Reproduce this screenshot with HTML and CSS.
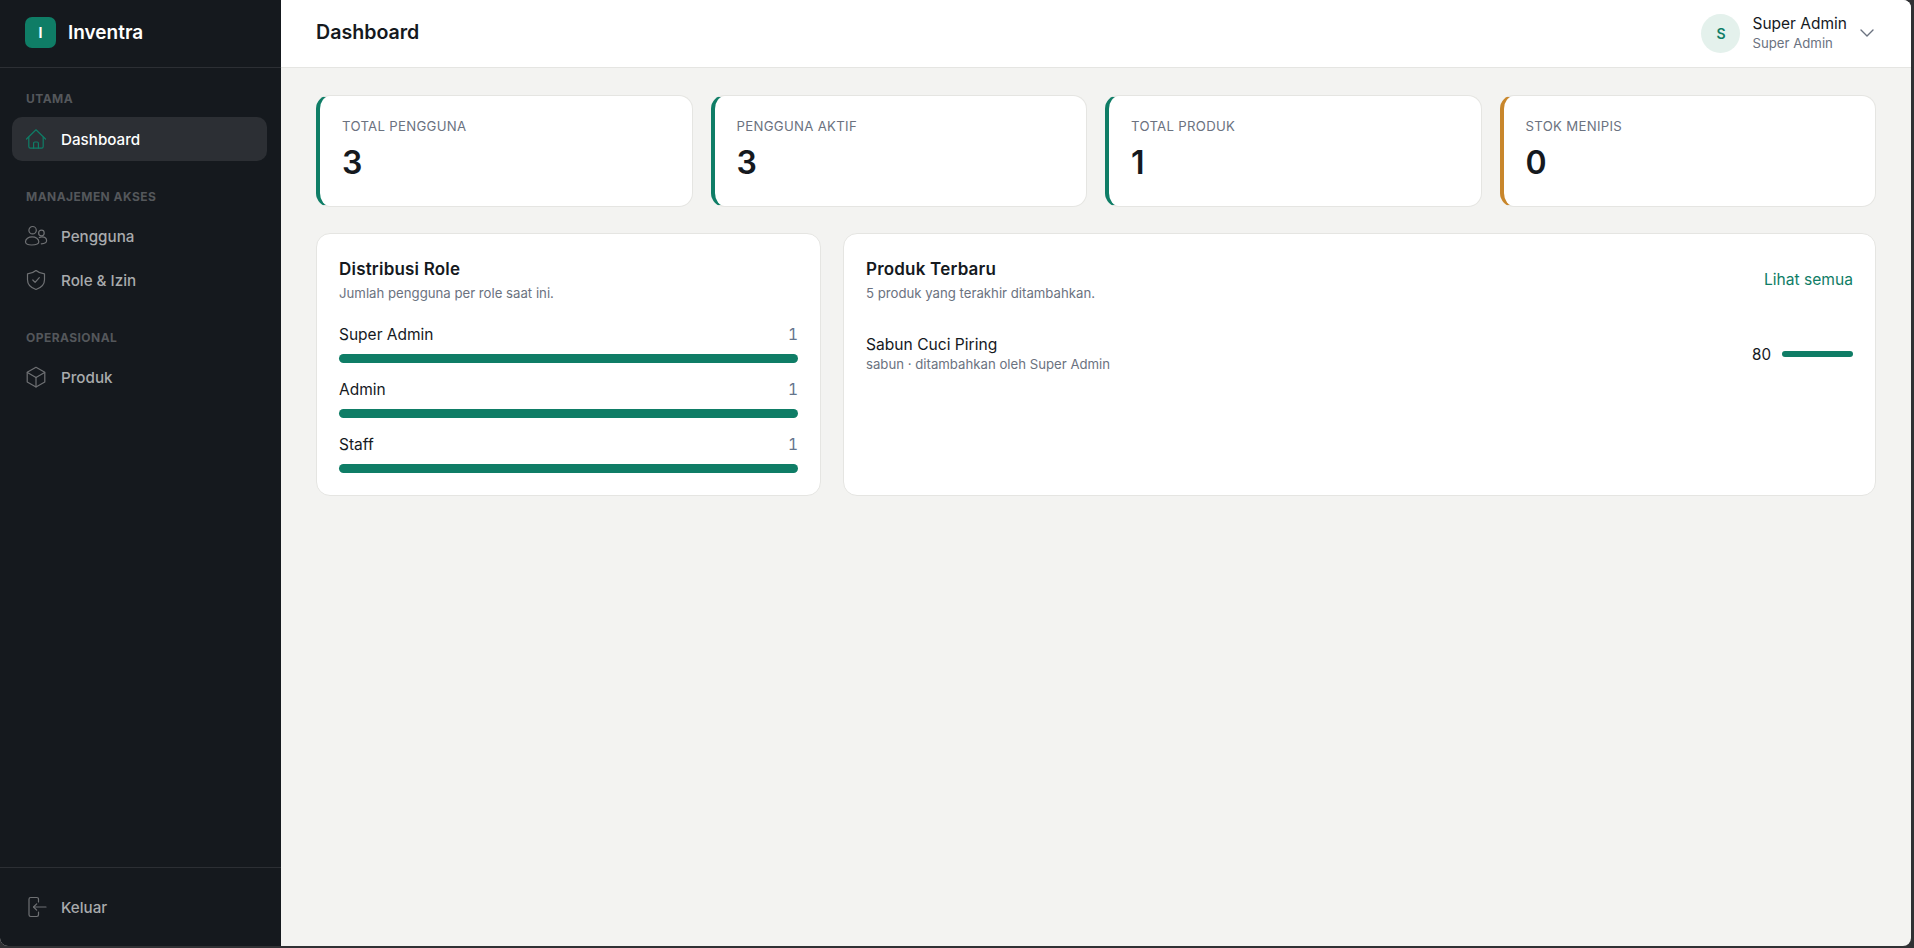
FILE: index.html
```html
<!DOCTYPE html>
<html lang="id">
<head>
    <meta charset="UTF-8">
    <meta name="viewport" content="width=device-width, initial-scale=1.0">
    <title>Dashboard - Inventra</title>
    <link rel="stylesheet" href="styles.css">
</head>
<body>
    <div class="app">
        <aside class="sidebar">
            <div class="brand">
                <span class="brand-mark">I</span>
                <span class="brand-name">Inventra</span>
            </div>

            <nav class="nav">
                <div class="nav-section">
                    <div class="nav-label">UTAMA</div>
                    <a class="nav-item active" href="#">
                        <svg class="nav-icon" viewBox="0 0 24 24"><path d="M2.500 12 12 2.800l9.500 9.200"/><path d="M4.800 10v9.600c0 .9.700 1.600 1.600 1.600h11.200c.9 0 1.600-.7 1.600-1.600V10"/><path d="M9.600 21.200v-5c0-.7.500-1.200 1.200-1.200h2.400c.7 0 1.200.5 1.200 1.200v5"/></svg>
                        Dashboard
                    </a>
                </div>
                <div class="nav-section">
                    <div class="nav-label">MANAJEMEN AKSES</div>
                    <a class="nav-item" href="#">
                        <svg class="nav-icon" viewBox="0 0 24 24"><circle cx="8.600" cy="6.200" r="3.700"/><circle cx="17.400" cy="9" r="2.800"/><path d="M7.500 21c-3.200 0-6-.9-6-3.200 0-3 3-5 6.600-5s6.700 2 6.700 5c0 2.300-3 3.200-7.300 3.200z"/><path d="M15.300 13.500c.8-.4 1.700-.6 2.600-.6 2.700 0 4.700 1.500 4.700 3.900 0 2-2 2.900-5.300 3"/></svg>
                        Pengguna
                    </a>
                    <a class="nav-item" href="#">
                        <svg class="nav-icon" viewBox="0 0 24 24"><path d="M12 2.500c2.400 2 5.200 3.100 8.500 3.300v6c0 4.500-3.200 8-8.500 9.700-5.300-1.700-8.500-5.200-8.500-9.700v-6c3.300-.2 6.100-1.300 8.500-3.300z"/><path d="m8.800 12 2.300 2.300 4.200-4.600"/></svg>
                        Role &amp; Izin
                    </a>
                </div>
                <div class="nav-section">
                    <div class="nav-label">OPERASIONAL</div>
                    <a class="nav-item" href="#">
                        <svg class="nav-icon" viewBox="0 0 24 24"><path d="m12 2.300 8.800 5v9.800L12 22l-8.800-4.900V7.300z"/><path d="m3.400 7.400 8.600 5 8.600-5"/><path d="M12 12.400V22"/></svg>
                        Produk
                    </a>
                </div>
            </nav>

            <div class="sidebar-footer">
                <a class="nav-item" href="#">
                    <svg class="nav-icon" viewBox="0 0 24 24"><path d="M14.500 7V4.200c0-1-.7-1.700-1.700-1.700H6.700c-1 0-1.700.7-1.700 1.700v15.600c0 1 .7 1.700 1.700 1.700h6.100c1 0 1.700-.7 1.700-1.700V17"/><path d="M22 12H9.500"/><path d="m12.700 8.800-3.200 3.200 3.200 3.200"/></svg>
                    Keluar
                </a>
            </div>
        </aside>

        <div class="main">
            <header class="topbar">
                <h1 class="page-title">Dashboard</h1>
                <div class="user-menu">
                    <span class="avatar">S</span>
                    <div class="user-info">
                        <div class="user-name">Super Admin</div>
                        <div class="user-role">Super Admin</div>
                    </div>
                    <svg class="chevron" viewBox="0 0 14 8"><path d="m1 1 6 6 6-6"/></svg>
                </div>
            </header>

            <main class="content">
                <section class="stats">
                    <div class="stat-card">
                        <div class="stat-label">TOTAL PENGGUNA</div>
                        <div class="stat-value">3</div>
                    </div>
                    <div class="stat-card">
                        <div class="stat-label">PENGGUNA AKTIF</div>
                        <div class="stat-value">3</div>
                    </div>
                    <div class="stat-card">
                        <div class="stat-label">TOTAL PRODUK</div>
                        <div class="stat-value">1</div>
                    </div>
                    <div class="stat-card warning">
                        <div class="stat-label">STOK MENIPIS</div>
                        <div class="stat-value">0</div>
                    </div>
                </section>

                <section class="panels">
                    <div class="panel">
                        <h2 class="panel-title">Distribusi Role</h2>
                        <p class="panel-sub">Jumlah pengguna per role saat ini.</p>
                        <div class="role-list">
                            <div class="role-row">
                                <div class="role-head"><span>Super Admin</span><span class="role-count">1</span></div>
                                <div class="bar"></div>
                            </div>
                            <div class="role-row">
                                <div class="role-head"><span>Admin</span><span class="role-count">1</span></div>
                                <div class="bar"></div>
                            </div>
                            <div class="role-row">
                                <div class="role-head"><span>Staff</span><span class="role-count">1</span></div>
                                <div class="bar"></div>
                            </div>
                        </div>
                    </div>

                    <div class="panel">
                        <div class="panel-head">
                            <div>
                                <h2 class="panel-title">Produk Terbaru</h2>
                                <p class="panel-sub">5 produk yang terakhir ditambahkan.</p>
                            </div>
                            <a class="panel-link" href="#">Lihat semua</a>
                        </div>
                        <div class="product-row">
                            <div>
                                <div class="product-name">Sabun Cuci Piring</div>
                                <div class="product-meta">sabun · ditambahkan oleh Super Admin</div>
                            </div>
                            <div class="product-stock">
                                <span>80</span>
                                <div class="bar small"></div>
                            </div>
                        </div>
                    </div>
                </section>
            </main>
        </div>
    </div>
</body>
</html>
```

FILE: styles.css
```css
* {
    box-sizing: border-box;
}
body {
    margin: 0;
    height: 100vh;
    padding: 0 3px 2px 0;
    background-color: #303134;
    font-family: Inter, "Noto Sans", sans-serif;
    color: #15191e;
    overflow: hidden;
}
a {
    text-decoration: none;
}
h1, h2, p {
    margin: 0;
}
.app {
    display: flex;
    height: 100%;
    overflow: hidden;
    background-color: #f3f3f1;
    border-radius: 0 8px 8px 8px;
}

/* sidebar */
.sidebar {
    width: 281px;
    flex-shrink: 0;
    display: flex;
    flex-direction: column;
    background-color: #15191e;
}
.brand {
    height: 68px;
    padding: 0 0 2px 25px;
    display: flex;
    align-items: center;
    gap: 12px;
    border-bottom: 1px solid #2c2f34;
}
.brand-mark {
    width: 31px;
    height: 31px;
    border-radius: 7px;
    background-color: #0f7d66;
    color: #fff;
    font-size: 14px;
    font-weight: 700;
    display: flex;
    align-items: center;
    justify-content: center;
}
.brand-name {
    color: #fff;
    font-size: 19px;
    font-weight: 600;
}
.nav {
    flex: 1;
    padding: 24px 14px 0 12px;
}
.nav-section {
    margin-bottom: 29px;
}
.nav-label {
    height: 14px;
    line-height: 14px;
    margin: 0 0 10px 14px;
    color: #54575b;
    font-size: 12px;
    font-weight: 700;
    letter-spacing: 0.45px;
}
.nav-section:first-child .nav-label {
    margin-bottom: 11px;
}
.nav-item {
    height: 44px;
    padding-left: 12px;
    display: flex;
    align-items: center;
    gap: 13px;
    border-radius: 10px;
    color: #a9abad;
    font-size: 15.2px;
    font-weight: 500;
}
.nav-item.active {
    background-color: #2c2f34;
    color: #fff;
}
.nav-icon {
    width: 24px;
    height: 24px;
    fill: none;
    stroke: #6f7174;
    stroke-width: 1.2;
    stroke-linecap: round;
    stroke-linejoin: round;
}
.nav-item.active .nav-icon {
    stroke: #0f7d66;
}
.sidebar-footer {
    height: 79px;
    padding: 17px 14px 0 12px;
    border-top: 1px solid #2c2f34;
}

/* topbar */
.main {
    flex: 1;
    min-width: 0;
    display: flex;
    flex-direction: column;
}
.topbar {
    height: 68px;
    padding: 0 37px 1px 35px;
    display: flex;
    align-items: center;
    justify-content: space-between;
    background-color: #fff;
    border-bottom: 1px solid #e5e5e2;
}
.page-title {
    margin-bottom: 2px;
    font-size: 19.6px;
    font-weight: 600;
}
.user-menu {
    display: flex;
    align-items: center;
}
.avatar {
    width: 39px;
    height: 39px;
    margin-right: 12px;
    border-radius: 50%;
    background-color: #e4f1ec;
    color: #0f7d66;
    font-size: 14px;
    font-weight: 600;
    display: flex;
    align-items: center;
    justify-content: center;
}
.user-name {
    font-size: 15.5px;
    line-height: 18px;
    font-weight: 400;
}
.user-role {
    margin-top: 1px;
    font-size: 13.2px;
    line-height: 18px;
    color: #6b7280;
}
.chevron {
    width: 14px;
    height: 8px;
    margin-left: 13px;
    fill: none;
    stroke: #6b7280;
    stroke-width: 1.4;
    stroke-linecap: round;
    stroke-linejoin: round;
}

/* content */
.content {
    flex: 1;
    padding: 27px 35px;
}
.stats {
    display: grid;
    grid-template-columns: repeat(4, 1fr);
    gap: 18px;
}
.stat-card {
    height: 112px;
    padding: 21px 22px 0 22px;
    background-color: #fff;
    border: 1px solid #e5e5e2;
    border-left: 4px solid #0f7d66;
    border-radius: 14px;
}
.stat-card.warning {
    border-left-color: #c8862b;
}
.stat-label {
    font-size: 13.2px;
    line-height: 18px;
    color: #6b7280;
    letter-spacing: 0.3px;
}
.stat-value {
    margin-top: 9px;
    font-size: 32px;
    line-height: 38px;
    font-weight: 600;
}
.panels {
    margin-top: 26px;
    display: grid;
    grid-template-columns: 505px 1fr;
    gap: 22px;
}
.panel {
    height: 263px;
    padding: 23px 22px;
    background-color: #fff;
    border: 1px solid #e5e5e2;
    border-radius: 14px;
}
.panel-title {
    font-size: 17px;
    line-height: 24px;
    font-weight: 600;
    letter-spacing: 0.2px;
}
.panel-sub {
    margin-top: 3px;
    font-size: 13.2px;
    line-height: 18px;
    color: #6b7280;
}
.role-list {
    margin-top: 23px;
    display: flex;
    flex-direction: column;
    gap: 17px;
}
.role-head {
    display: flex;
    justify-content: space-between;
    font-size: 15.5px;
    line-height: 20px;
    margin-bottom: 9px;
}
.role-count {
    color: #64748b;
    font-variant-numeric: tabular-nums;
}
.bar {
    height: 9px;
    border-radius: 5px;
    background-color: #0f7d66;
}
.bar.small {
    width: 71px;
    height: 6px;
    border-radius: 3px;
}
.panel-head {
    display: flex;
    justify-content: space-between;
    align-items: center;
}
.panel-link {
    color: #0f7d66;
    font-size: 15.6px;
}
.product-row {
    margin-top: 33px;
    display: flex;
    align-items: center;
    justify-content: space-between;
}
.product-name {
    font-size: 15.6px;
    line-height: 20px;
}
.product-meta {
    font-size: 13.2px;
    line-height: 18px;
    color: #6b7280;
}
.product-stock {
    display: flex;
    align-items: center;
    gap: 11px;
    font-size: 15.2px;
}
```
